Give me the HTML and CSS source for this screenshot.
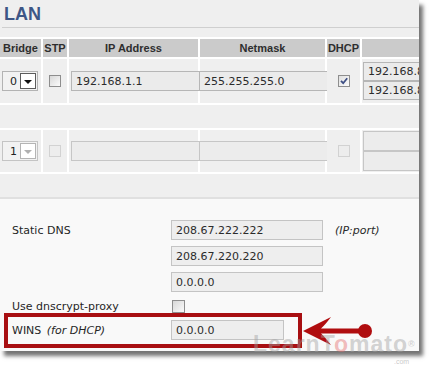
FILE: index.html
```html
<!DOCTYPE html>
<html>
<head>
<meta charset="utf-8">
<link rel="stylesheet" href="styles.css">
</head>
<body>
<div class="stage">
  <div class="shot">
    <div class="top">
      <h1 class="title">LAN</h1>
      <div class="rule"></div>
      <div class="tbl">
        <div class="row head">
          <div class="cell">Bridge</div>
          <div class="cell">STP</div>
          <div class="cell">IP Address</div>
          <div class="cell">Netmask</div>
          <div class="cell">DHCP</div>
          <div class="cell"></div>
        </div>
        <div class="row r1">
          <div class="cell c-br"><span class="sel"><span class="sel-val">0</span><span class="sel-btn"><span class="tri"></span></span></span></div>
          <div class="cell c-mid"><span class="cb"></span></div>
          <div class="cell"><input class="field f-ip" value="192.168.1.1"></div>
          <div class="cell"><input class="field f-nm" value="255.255.255.0"></div>
          <div class="cell c-mid"><span class="cb checked"><svg viewBox="0 0 10 10" width="10" height="10"><path d="M2 4.8 L4.2 7.2 L8.2 2.2" fill="none" stroke="#3e4f84" stroke-width="1.8"/></svg></span></div>
          <div class="cell c-stack s1"><input class="field f-rng" value="192.168.8.100"><input class="field f-rng" value="192.168.8.150"></div>
        </div>
        <div class="spacer"></div>
        <div class="row r2 off">
          <div class="cell c-br"><span class="sel"><span class="sel-val">1</span><span class="sel-btn"><span class="tri"></span></span></span></div>
          <div class="cell c-mid"><span class="cb"></span></div>
          <div class="cell"><input class="field f-ip" value=""></div>
          <div class="cell"><input class="field f-nm" value=""></div>
          <div class="cell c-mid"><span class="cb"></span></div>
          <div class="cell c-stack s2"><input class="field f-rng" value=""><input class="field f-rng" value=""></div>
        </div>
        <div class="spacer"></div>
      </div>
    </div>
    <div class="bottom">
      <div class="frow">
        <div class="lbl">Static DNS</div>
        <input class="field f-dns" value="208.67.222.222">
        <span class="hint">(IP:port)</span>
      </div>
      <div class="frow">
        <div class="lbl"></div>
        <input class="field f-dns" value="208.67.220.220">
      </div>
      <div class="frow">
        <div class="lbl"></div>
        <input class="field f-dns" value="0.0.0.0">
      </div>
      <div class="frow short">
        <div class="lbl">Use dnscrypt-proxy</div>
        <span class="cb cb-lg"></span>
      </div>
      <div class="frow">
        <div class="lbl">WINS <i>(for DHCP)</i></div>
        <input class="field f-wins" value="0.0.0.0">
      </div>
    </div>
  </div>
  <div class="callout"></div>
  <svg class="arrow" width="80" height="36" viewBox="0 0 80 36">
    <path d="M3 17 L31 3 Q25 11 21 14.5 L60 14.5 L60 19.5 L21 19.5 Q25 23 31 31 Z" fill="#b00d0f"/>
    <circle cx="65" cy="17" r="7" fill="#b00d0f"/>
  </svg>
  <div class="watermark">LearnT<span class="tom">o</span>mato<span class="reg">®</span></div>
  <div class="wm-com">.com</div>
</div>
</body>
</html>
```

FILE: styles.css
```css
html, body {
  margin: 0;
  padding: 0;
  background: #ffffff;
}
body {
  width: 434px;
  height: 369px;
  overflow: hidden;
  font-family: "DejaVu Sans", "Liberation Sans", sans-serif;
  font-size: 11px;
  color: #2b2b2b;
}
.stage {
  position: relative;
  width: 434px;
  height: 369px;
}
.shot {
  width: 419px;
  height: 351px;
  overflow: hidden;
  box-shadow: 4px 5px 4px rgba(0, 0, 0, 0.55);
  background: #f9f9f9;
}
.top {
  background: #efefef;
  border-bottom: 2px solid #e0e0e0;
}
.title {
  margin: 0;
  padding: 5px 0 0 4px;
  font-family: "Liberation Sans", Arial, sans-serif;
  font-size: 18px;
  line-height: 18px;
  font-weight: bold;
  color: #3d5686;
}
.rule {
  margin: 4px 0 0 2px;
  height: 1px;
  background: #cfcfcf;
}
.tbl {
  margin-top: 9px;
  padding-top: 2px;
  background: #ffffff;
  display: flex;
  flex-direction: column;
  gap: 2px;
  width: 419px;
}
.row {
  display: grid;
  grid-template-columns: 41px 24px 129px 125px 33px 57px;
  column-gap: 2px;
}
.cell {
  background: #efefef;
  display: flex;
  align-items: center;
  min-width: 0;
}
.head { height: 18px; }
.head .cell {
  background: #cbcbcb;
  justify-content: center;
  font-family: "Liberation Sans", Arial, sans-serif;
  font-weight: bold;
  font-size: 11px;
  color: #2e2e2e;
}
.r1 { height: 44px; }
.r2 { height: 42px; }
.spacer {
  height: 23px;
  background: #efefef;
}
.c-br { padding-left: 2px; }
.c-mid { justify-content: center; }

.sel {
  box-sizing: border-box;
  width: 36px;
  height: 20px;
  border: 1px solid #b3b3b3;
  background: #f2f2f2;
  display: flex;
  align-items: center;
  justify-content: space-between;
  padding: 0 1px 0 7px;
  flex-shrink: 0;
}
.sel-val { color: #222; }
.sel-btn {
  box-sizing: border-box;
  width: 16px;
  height: 16px;
  border: 1px solid #5c5c5c;
  background: #ffffff;
  display: flex;
  align-items: center;
  justify-content: center;
}
.tri {
  width: 0;
  height: 0;
  border-left: 4px solid transparent;
  border-right: 4px solid transparent;
  border-top: 4px solid #111;
  margin-top: 1px;
}
.off .sel { border-color: #c4c4c4; }
.off .sel-btn { border-color: #b4b4b4; }
.off .tri { border-top-color: #b0b0b0; }

.cb {
  box-sizing: border-box;
  width: 12px;
  height: 12px;
  border: 1px solid #8e8e8e;
  background: linear-gradient(135deg, #d8d8d8, #fbfbfb);
  display: inline-flex;
  align-items: center;
  justify-content: center;
  flex-shrink: 0;
}
.cb.checked { background: linear-gradient(135deg, #e0e0e0, #fbfbfb); }
.off .cb {
  border-color: #d2d2d2;
  background: #ededed;
}
.cb-lg {
  width: 13px;
  height: 13px;
  margin-left: 1px;
}

.field {
  box-sizing: border-box;
  height: 20px;
  margin: 0;
  padding: 0 0 0 4px;
  border: 1px solid #b6b6b6;
  background: #ebebeb;
  font-family: "DejaVu Sans", sans-serif;
  font-size: 11px;
  color: #2b2b2b;
  outline: none;
  flex-shrink: 0;
}
.f-ip { width: 129px; margin-left: 2px; }
.f-nm { width: 129px; margin-left: -1px; }
.off .field { border-color: #c6c6c6; background: #ececec; }
.c-stack {
  flex-direction: column;
  align-items: flex-start;
  justify-content: flex-start;
}
.s1 { padding-top: 3px; }
.s1 .f-rng { height: 19px; }
.s2 { padding-top: 1px; }
.f-rng { width: 70px; margin-left: 1px; }

.bottom {
  padding: 18px 0 0 12px;
}
.frow {
  display: flex;
  align-items: center;
  height: 26px;
}
.frow.short { height: 22px; }
.lbl {
  width: 159px;
  flex-shrink: 0;
  color: #262626;
}
.lbl i { margin-left: 2px; }
.f-dns {
  width: 152px;
  border-color: #c4c4c4;
  background: #eeeeee;
}
.f-wins {
  width: 113px;
  border-color: #c4c4c4;
  background: #eeeeee;
}
.hint {
  margin-left: 12px;
  font-style: italic;
  color: #2b2b2b;
}

.callout {
  position: absolute;
  left: 4px;
  top: 313px;
  width: 298px;
  height: 35px;
  box-sizing: border-box;
  border: 4px solid #a80f12;
}
.arrow {
  position: absolute;
  left: 300px;
  top: 314px;
}
.watermark {
  position: absolute;
  left: 253px;
  top: 333px;
  font-family: "Liberation Sans", Arial, sans-serif;
  font-weight: bold;
  font-size: 23px;
  line-height: 23px;
  letter-spacing: 1px;
  color: rgba(160, 160, 160, 0.45);
  white-space: nowrap;
}
.watermark .tom { color: rgba(230, 110, 110, 0.45); }
.watermark .reg {
  font-size: 9px;
  vertical-align: top;
  letter-spacing: 0;
}
.wm-com {
  position: absolute;
  left: 394px;
  top: 358px;
  font-family: "Liberation Sans", Arial, sans-serif;
  font-size: 7px;
  line-height: 8px;
  color: rgba(165, 165, 165, 0.6);
}
```
